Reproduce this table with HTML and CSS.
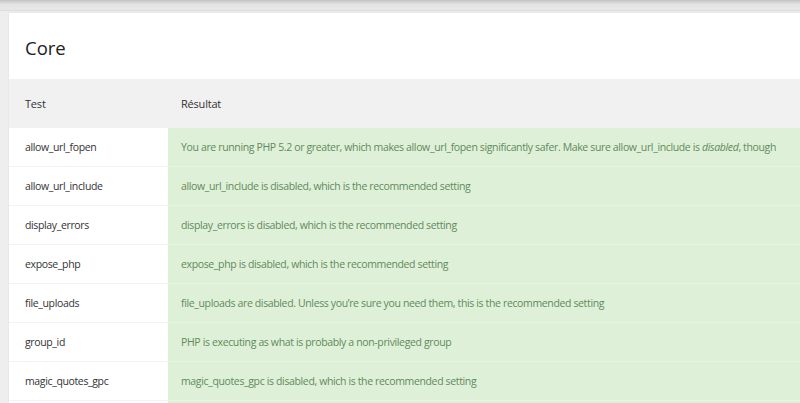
FILE: index.html
```html
<!DOCTYPE html>
<html lang="fr">
<head>
<meta charset="utf-8">
<link rel="stylesheet" href="styles.css">
</head>
<body>
<div class="topbar"></div>
<section class="card">
  <h2 class="card-title">Core</h2>
  <table class="results">
    <thead>
      <tr><th class="col-test">Test</th><th class="col-result">Résultat</th></tr>
    </thead>
    <tbody>
      <tr><td class="col-test">allow_url_fopen</td><td class="ok">You are running PHP 5.2 or greater, which makes allow_url_fopen significantly safer. Make sure allow_url_include is <em>disabled</em>, though</td></tr>
      <tr><td class="col-test">allow_url_include</td><td class="ok">allow_url_include is disabled, which is the recommended setting</td></tr>
      <tr><td class="col-test">display_errors</td><td class="ok">display_errors is disabled, which is the recommended setting</td></tr>
      <tr><td class="col-test">expose_php</td><td class="ok">expose_php is disabled, which is the recommended setting</td></tr>
      <tr><td class="col-test">file_uploads</td><td class="ok">file_uploads are disabled. Unless you’re sure you need them, this is the recommended setting</td></tr>
      <tr><td class="col-test">group_id</td><td class="ok">PHP is executing as what is probably a non-privileged group</td></tr>
      <tr><td class="col-test">magic_quotes_gpc</td><td class="ok">magic_quotes_gpc is disabled, which is the recommended setting</td></tr>
      <tr><td class="col-test"></td><td class="ok"></td></tr>
    </tbody>
  </table>
</section>
</body>
</html>
```
FILE: styles.css
```css
html, body {
  margin: 0;
  padding: 0;
}
body {
  background: #eeeeee;
  font-family: "Open Sans", "Noto Sans", sans-serif;
  color: #333;
  height: 403px;
  overflow: hidden;
}
.topbar {
  height: 10px;
  background: linear-gradient(#c4c4c4, #e4e4e4 45%, #e8e8e8);
  border-bottom: 1px solid #dcdcdc;
  margin-bottom: 2px;
}
.card {
  margin-left: 9px;
  width: 820px;
  background: #fff;
  box-shadow: 0 0 2px rgba(0,0,0,0.08);
}
.card-title {
  margin: 0;
  padding: 22px 16px 0;
  height: 44px;
  font-size: 18.5px;
  font-weight: 400;
  color: #222;
  line-height: 26px;
}
.results {
  border-collapse: collapse;
  width: 100%;
  font-size: 10.5px;
  letter-spacing: -0.36px;
}
.results th {
  background: #f1f1f1;
  font-weight: 400;
  text-align: left;
  height: 49px;
  padding: 0 13px 0 16px;
  color: #333;
  font-size: 11px;
  letter-spacing: -0.2px;
}
.results th.col-result {
  padding-left: 13px;
}
.results td {
  height: 38px;
  padding: 0 13px 0 16px;
  border-bottom: 1px solid #f3f3f3;
  color: #333;
  white-space: nowrap;
}
.results .col-test {
  width: 130px;
}
.results td.ok {
  background: #dff0d8;
  color: #5f8a5c;
  padding-left: 13px;
  border-bottom: 1px solid #e7f4e2;
}
```
